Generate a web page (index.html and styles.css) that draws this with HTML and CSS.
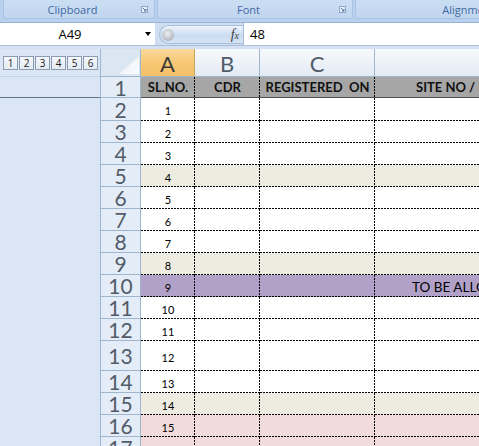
FILE: index.html
```html
<!DOCTYPE html>
<html>
<head>
<meta charset="utf-8">
<title>Sheet</title>
<link rel="stylesheet" href="styles.css">
</head>
<body>
<div class="app">
  <div class="ribbon">
    <div class="group g-clip"><span class="glabel">Clipboard</span><span class="launch"><svg width="7" height="7" viewBox="0 0 7 7"><rect x="0.5" y="0.5" width="6" height="6" fill="#e9f0f9" stroke="#8aa6cc"/><path d="M2 2 L5 5 M5 3 V5 H3" stroke="#56708f" fill="none"/></svg></span></div>
    <div class="group g-font"><span class="glabel">Font</span><span class="launch"><svg width="7" height="7" viewBox="0 0 7 7"><rect x="0.5" y="0.5" width="6" height="6" fill="#e9f0f9" stroke="#8aa6cc"/><path d="M2 2 L5 5 M5 3 V5 H3" stroke="#56708f" fill="none"/></svg></span></div>
    <div class="group g-align"><span class="glabel">Alignment</span><span class="launch"></span></div>
  </div>
  <div class="fbar">
    <div class="namebox"><span class="nb-text">A49</span><span class="nb-arrow"></span></div>
    <div class="fx"><span class="fx-ball"></span><span class="fx-label">f<span class="fx-x">x</span></span></div>
    <div class="finput">48</div>
  </div>
  <div class="strip"></div>
  <div class="sheet">
    <div class="outline">
      <div class="levels">
        <span class="lv">1</span><span class="lv">2</span><span class="lv">3</span><span class="lv">4</span><span class="lv">5</span><span class="lv">6</span>
      </div>
      <div class="ol-row1"></div>
      <div class="ol-rest"></div>
    </div>
    <div class="grid">
      <div class="row hdr">
        <div class="rh corner"><svg width="22" height="20" viewBox="0 0 22 20"><defs><linearGradient id="tg" x1="0" y1="0" x2="1" y2="1"><stop offset="0" stop-color="#e8eff8"/><stop offset="1" stop-color="#fbfcfe"/></linearGradient></defs><polygon points="21,1 21,19 1,19" fill="url(#tg)"/></svg></div>
        <div class="ch col-a sel">A</div>
        <div class="ch col-b">B</div>
        <div class="ch col-c">C</div>
        <div class="ch col-d"></div>
      </div>
      <div class="row r1">
        <div class="rh">1</div>
        <div class="cell col-a">SL.NO.</div>
        <div class="cell col-b">CDR</div>
        <div class="cell col-c">REGISTERED&nbsp; ON</div>
        <div class="cell col-d head-d">SITE NO / KHATA</div>
      </div>
      <div class="row r2"><div class="rh">2</div><div class="cell col-a">1</div><div class="cell col-b"></div><div class="cell col-c"></div><div class="cell col-d"></div></div>
      <div class="row"><div class="rh">3</div><div class="cell col-a">2</div><div class="cell col-b"></div><div class="cell col-c"></div><div class="cell col-d"></div></div>
      <div class="row"><div class="rh">4</div><div class="cell col-a">3</div><div class="cell col-b"></div><div class="cell col-c"></div><div class="cell col-d"></div></div>
      <div class="row beige"><div class="rh">5</div><div class="cell col-a">4</div><div class="cell col-b"></div><div class="cell col-c"></div><div class="cell col-d"></div></div>
      <div class="row"><div class="rh">6</div><div class="cell col-a">5</div><div class="cell col-b"></div><div class="cell col-c"></div><div class="cell col-d"></div></div>
      <div class="row"><div class="rh">7</div><div class="cell col-a">6</div><div class="cell col-b"></div><div class="cell col-c"></div><div class="cell col-d"></div></div>
      <div class="row"><div class="rh">8</div><div class="cell col-a">7</div><div class="cell col-b"></div><div class="cell col-c"></div><div class="cell col-d"></div></div>
      <div class="row beige"><div class="rh">9</div><div class="cell col-a">8</div><div class="cell col-b"></div><div class="cell col-c"></div><div class="cell col-d"></div></div>
      <div class="row purple"><div class="rh">10</div><div class="cell col-a">9</div><div class="cell col-b"></div><div class="cell col-c"></div><div class="cell col-d note">TO BE ALLOTTED</div></div>
      <div class="row"><div class="rh">11</div><div class="cell col-a">10</div><div class="cell col-b"></div><div class="cell col-c"></div><div class="cell col-d"></div></div>
      <div class="row"><div class="rh">12</div><div class="cell col-a">11</div><div class="cell col-b"></div><div class="cell col-c"></div><div class="cell col-d"></div></div>
      <div class="row tall"><div class="rh">13</div><div class="cell col-a">12</div><div class="cell col-b"></div><div class="cell col-c"></div><div class="cell col-d"></div></div>
      <div class="row"><div class="rh">14</div><div class="cell col-a">13</div><div class="cell col-b"></div><div class="cell col-c"></div><div class="cell col-d"></div></div>
      <div class="row beige"><div class="rh">15</div><div class="cell col-a">14</div><div class="cell col-b"></div><div class="cell col-c"></div><div class="cell col-d"></div></div>
      <div class="row pink"><div class="rh">16</div><div class="cell col-a">15</div><div class="cell col-b"></div><div class="cell col-c"></div><div class="cell col-d"></div></div>
      <div class="row pink"><div class="rh">17</div><div class="cell col-a">16</div><div class="cell col-b"></div><div class="cell col-c"></div><div class="cell col-d"></div></div>
    </div>
  </div>
</div>
</body>
</html>
```

FILE: styles.css
```css
* { box-sizing: border-box; }
html, body { margin: 0; padding: 0; }
body {
  width: 479px;
  height: 446px;
  overflow: hidden;
  background: #dbe6f4;
  font-family: Lato, "Open Sans", sans-serif;
}
.app { width: 479px; height: 446px; overflow: hidden; }

/* ribbon group labels */
.ribbon {
  height: 22px;
  display: flex;
  gap: 2px;
  padding-left: 3px;
  background: #b9d1ee;
  align-items: flex-start;
}
.group {
  flex: none;
  height: 19px;
  display: flex;
  align-items: center;
  background: linear-gradient(#cadef3, #c1d6ef);
  border: 1px solid #a9c3e4;
  border-top: none;
  border-radius: 0 0 3px 3px;
  padding-right: 6px;
}
.g-clip { width: 152px; }
.g-font { width: 196px; }
.g-align { width: 240px; }
.glabel {
  flex: 1;
  text-align: center;
  font-family: "Open Sans", sans-serif;
  font-size: 11px;
  color: #4469a3;
}
.launch { width: 7px; height: 7px; display: flex; }

/* formula bar */
.fbar {
  height: 24px;
  display: flex;
  background: #cfdef1;
  border-top: 1px solid #98b2d4;
  border-bottom: 1px solid #a9bed8;
}
.namebox {
  width: 155px;
  background: #fff;
  display: flex;
  align-items: center;
  font-family: "Open Sans", sans-serif;
  font-size: 13px;
  color: #000;
}
.nb-text { width: 140px; text-align: center; }
.nb-arrow {
  width: 0; height: 0;
  border-left: 3.5px solid transparent;
  border-right: 3.5px solid transparent;
  border-top: 4px solid #000;
  margin-left: 5px;
}
.fx {
  width: 84px;
  height: 19px;
  margin: 2px 0 0 4px;
  border-radius: 10px 0 0 10px;
  background: linear-gradient(#edf3fb, #cbdcf1 55%, #d5e3f4);
  border: 1px solid #a7bfdd;
  border-right: none;
  display: flex;
  align-items: center;
  padding-left: 2px;
}
.fx-ball {
  width: 12px; height: 12px;
  border-radius: 50%;
  background: radial-gradient(circle at 45% 40%, #f4f4f4, #bdbdbd 55%, #8f8f8f);
  opacity: 0.8;
}
.fx-label {
  margin-left: auto;
  margin-right: 4px;
  font-family: "Liberation Serif", serif;
  font-style: italic;
  font-size: 14px;
  color: #3d3d3d;
}
.fx-x { font-size: 10px; }
.finput {
  flex: 1;
  background: #fff;
  border-left: 1px solid #a5bcd8;
  font-family: "Open Sans", sans-serif;
  font-size: 13px;
  padding-left: 6px;
  display: flex;
  align-items: center;
  color: #000;
}
.strip { height: 3px; background: #d3e1f3; }

/* sheet */
.sheet { display: flex; }
.outline {
  width: 101px;
  flex: none;
  background: #dae6f4;
  border-right: 1px solid #9eb6ce;
}
.levels {
  height: 28px;
  display: flex;
  gap: 1px;
  padding: 7px 0 0 3px;
  border-bottom: 1px solid #c2d3e8;
}
.lv {
  width: 15px;
  height: 14px;
  border: 1px solid #8c9db3;
  background: linear-gradient(#f5f8fc, #e3eaf3);
  font-family: "Open Sans", sans-serif;
  font-size: 10px;
  line-height: 12px;
  text-align: center;
  color: #222;
}
.ol-row1 { height: 21px; border-bottom: 1px solid #66778d; }

.grid { width: 400px; flex: none; }
.row { display: flex; height: 22px; }
.row.hdr { height: 28px; }
.row.r1 { height: 21px; }
.row.r2 { height: 23px; }
.row.tall { height: 30px; }

.rh {
  width: 40px;
  flex: none;
  background: #e4ecf7;
  border-right: 1px solid #9eb6ce;
  border-bottom: 1px solid #9eb6ce;
  display: flex;
  align-items: center;
  justify-content: center;
  font-size: 21px;
  font-weight: 400;
  color: #525c69;
  line-height: 18px;
  padding-top: 1px;
}
.corner {
  background: #dbe6f3;
  align-items: flex-end;
  justify-content: flex-end;
  padding: 0 0 1px 0;
}
.corner svg { display: block; }
.ch {
  flex: none;
  background: linear-gradient(#f7f9fd, #e4ebf5);
  border-right: 1px solid #9eb6ce;
  border-bottom: 1px solid #9eb6ce;
  display: flex;
  align-items: center;
  justify-content: center;
  font-size: 22px;
  font-weight: 400;
  color: #525c69;
  padding-top: 2px;
}
.ch.sel {
  background: linear-gradient(#fbd99d, #f7c875 50%, #f3c066);
  border-right-color: #c9a45e;
  color: #3a3a3a;
}
.col-a { width: 54px; }
.col-b { width: 65px; }
.col-c { width: 115px; }
.col-d { width: 166px; }

.cell {
  flex: none;
  background-color: #fff;
  background-image:
    repeating-linear-gradient(90deg, #000 0 2px, transparent 2px 3px),
    repeating-linear-gradient(180deg, #000 0 2px, transparent 2px 3px);
  background-size: 100% 1px, 1px 100%;
  background-position: 0 100%, 100% 0;
  background-repeat: no-repeat;
  display: flex;
  align-items: center;
  justify-content: center;
  font-size: 11px;
  color: #000;
  padding-top: 2px;
  white-space: nowrap;
  overflow: hidden;
}
.row.r1 .cell {
  background-color: #a6a6a6;
  background-image: repeating-linear-gradient(180deg, #000 0 2px, transparent 2px 3px);
  background-size: 1px 100%;
  background-position: 100% 0;
  border-bottom: 1px solid #4f4f4f;
  font-weight: 700;
  font-size: 13px;
  color: #111;
  padding-top: 0;
}
.cell.head-d { justify-content: flex-start; padding-left: 41px; }
.row.beige .cell { background-color: #eeece1; }
.row.purple .cell { background-color: #b1a0c7; }
.row.pink .cell { background-color: #f2dcdb; }
.cell.note { justify-content: flex-start; padding-left: 37px; font-size: 13.5px; }
```
